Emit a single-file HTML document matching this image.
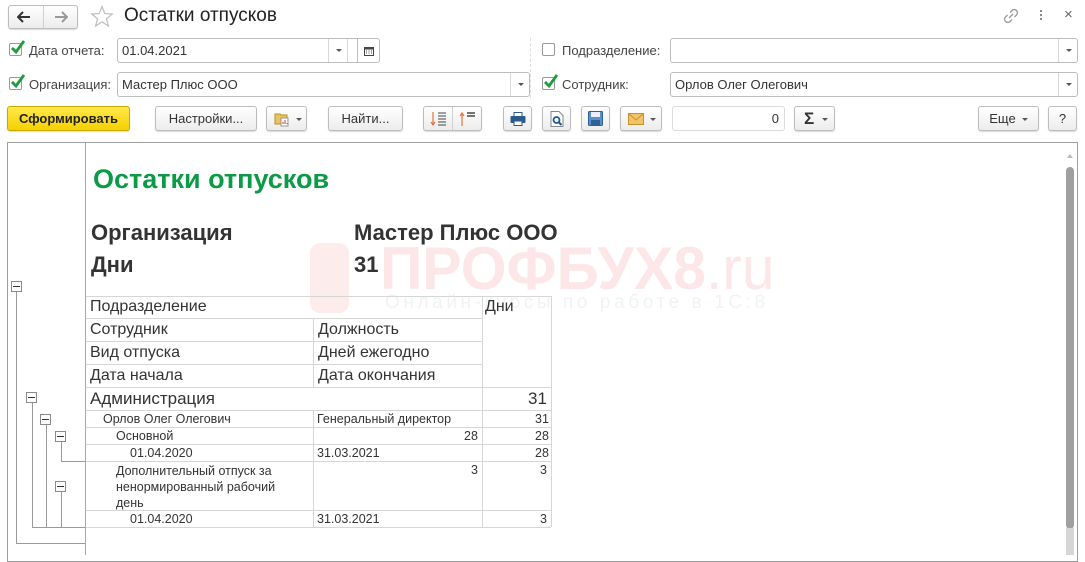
<!DOCTYPE html>
<html><head><meta charset="utf-8">
<style>
*{box-sizing:border-box;margin:0;padding:0}
body{width:1085px;height:555px;overflow:hidden;background:#fff;font-family:"Liberation Sans",Arial,sans-serif;color:#333;position:relative;font-size:13px}
.a{position:absolute}
.btn{position:absolute;height:25px;border:1px solid #bdbdbd;border-radius:3px;background:linear-gradient(#fff,#ececec);box-shadow:0 1px 1px rgba(0,0,0,.15);font-size:13px;color:#333;display:flex;align-items:center;justify-content:center}
.inp{position:absolute;height:25px;border:1px solid #bdbdbd;border-radius:3px;background:#fff;font-size:13px;color:#333;padding-left:4px;display:flex;align-items:center}
.dd{position:absolute;right:0;top:0;width:19px;height:23px;border-left:1px solid #d8d8d8}
.dd:after{content:"";position:absolute;left:7px;top:10px;border:3px solid transparent;border-top:3px solid #555}
.cb{position:absolute;width:13px;height:13px;border:1px solid #9a9a9a;border-radius:2px;background:#fff}
.lbl{position:absolute;font-size:13px;color:#444}
.t{position:absolute;font-size:16px;color:#333;white-space:nowrap}
.s{position:absolute;font-size:12.5px;color:#333;white-space:nowrap}
.hl{position:absolute;height:1px;background:#d6d6d6}
.vl{position:absolute;width:1px;background:#d6d6d6}
.tl{position:absolute;background:#9a9a9a}
.mb{position:absolute;width:11px;height:11px;border:1px solid #8a8a8a;background:#fff}
.mb:after{content:"";position:absolute;left:1px;top:4px;width:7px;height:1px;background:#333}
.h{position:absolute;font-size:22px;font-weight:bold;color:#333;white-space:nowrap}
</style></head><body>

<!-- top nav -->
<div class="btn" style="left:8px;top:5px;width:70px;height:24px;border-radius:3px"></div>
<div class="a" style="left:43px;top:6px;width:1px;height:22px;background:#d0d0d0"></div>
<svg class="a" style="left:17px;top:11px" width="14" height="12"><path d="M1 6H13M6 1L1 6L6 11" stroke="#333" stroke-width="2" fill="none"/></svg>
<svg class="a" style="left:54px;top:11px" width="14" height="12"><path d="M1 6H13M8 1L13 6L8 11" stroke="#999" stroke-width="2" fill="none"/></svg>
<svg class="a" style="left:90px;top:5px" width="24" height="23"><path d="M12 1.5L14.8 8.6L22.3 9L16.4 13.8L18.4 21L12 16.9L5.6 21L7.6 13.8L1.7 9L9.2 8.6Z" fill="none" stroke="#bdbdbd" stroke-width="1.2"/></svg>
<div class="a" style="left:124px;top:5px;font-size:19px;color:#222">Остатки отпусков</div>
<svg class="a" style="left:1003px;top:8px" width="16" height="16"><path d="M6 10L10 6M7 4.5L9 2.5A2.5 2.5 0 0 1 13.5 7L11.5 9M9 11.5L7 13.5A2.5 2.5 0 0 1 2.5 9L4.5 7" stroke="#999" stroke-width="1.3" fill="none"/></svg>
<div class="a" style="left:1040px;top:10px;width:2px;height:2px;background:#888;box-shadow:0 4px 0 #888,0 8px 0 #888"></div>
<div class="a" style="left:1064px;top:6px;font-size:15px;color:#666">×</div>

<!-- row 1 -->
<div class="cb" style="left:9px;top:43px"></div>
<svg class="a" style="left:9px;top:39px" width="17" height="17"><path d="M3 9L7 13L15 2" stroke="#1e9b3c" stroke-width="2.8" fill="none"/></svg>
<div class="lbl" style="left:29px;top:43px">Дата отчета:</div>
<div class="inp" style="left:117px;top:38px;width:251px">01.04.2021<div class="dd" style="right:19px;width:20px;border-right:0"></div></div>
<div class="a" style="left:347px;top:39px;width:1px;height:23px;background:#d8d8d8"></div>
<div class="btn" style="left:357px;top:38px;width:23px;border-radius:0 3px 3px 0;box-shadow:none;background:#fff"><svg width="10" height="10"><rect x="0.5" y="1.5" width="9" height="8" fill="none" stroke="#444"/><rect x="0.5" y="1.5" width="9" height="2" fill="#444"/><path d="M2 5h1M4.5 5h1M7 5h1M2 7h1M4.5 7h1M7 7h1" stroke="#444"/></svg></div>
<div class="a" style="left:530px;top:38px;height:60px;border-left:1px dashed #ddd"></div>
<div class="cb" style="left:542px;top:43px"></div>
<div class="lbl" style="left:562px;top:43px">Подразделение:</div>
<div class="inp" style="left:670px;top:38px;width:408px"><div class="dd"></div></div>

<!-- row 2 -->
<div class="cb" style="left:9px;top:77px"></div>
<svg class="a" style="left:9px;top:73px" width="17" height="17"><path d="M3 9L7 13L15 2" stroke="#1e9b3c" stroke-width="2.8" fill="none"/></svg>
<div class="lbl" style="left:29px;top:77px">Организация:</div>
<div class="inp" style="left:117px;top:72px;width:413px">Мастер Плюс ООО<div class="dd"></div></div>
<div class="cb" style="left:542px;top:77px"></div>
<svg class="a" style="left:542px;top:73px" width="17" height="17"><path d="M3 9L7 13L15 2" stroke="#1e9b3c" stroke-width="2.8" fill="none"/></svg>
<div class="lbl" style="left:562px;top:77px">Сотрудник:</div>
<div class="inp" style="left:670px;top:72px;width:408px">Орлов Олег Олегович<div class="dd"></div></div>

<!-- toolbar -->
<div class="btn" style="left:7px;top:106px;width:123px;background:linear-gradient(#ffe94a,#f5d000);border-color:#c9a800;font-weight:bold;color:#222">Сформировать</div>
<div class="btn" style="left:155px;top:106px;width:102px">Настройки...</div>
<div class="btn" style="left:266px;top:106px;width:41px;justify-content:flex-start;padding-left:7px"><svg width="16" height="16"><path d="M1 3h5l1 1h6v9H1z" fill="#e8c45a" stroke="#b8902a"/><rect x="7" y="7" width="7" height="8" fill="#fff" stroke="#999"/><path d="M9 13v-2M11 13v-4M13 13v-1" stroke="#d33"/></svg><span style="margin-left:6px;border:3px solid transparent;border-top:3px solid #555;margin-top:4px"></span></div>
<div class="btn" style="left:328px;top:106px;width:75px">Найти...</div>
<div class="btn" style="left:423px;top:106px;width:59px"></div>
<div class="a" style="left:452px;top:107px;width:1px;height:23px;background:#d0d0d0"></div>
<svg class="a" style="left:430px;top:111px" width="18" height="16"><path d="M3 1v12M1 11l2 3 2-3" stroke="#e8743b" stroke-width="1.2" fill="none"/><path d="M8 2h8M8 5h8M8 8h8M8 11h8M8 14h8" stroke="#444"/></svg>
<svg class="a" style="left:459px;top:111px" width="18" height="16"><path d="M3 15V3M1 5l2-3 2 3" stroke="#e8743b" stroke-width="1.2" fill="none"/><path d="M8 2h8M8 5h8" stroke="#222" stroke-width="1.3"/></svg>
<div class="btn" style="left:503px;top:106px;width:29px"><svg width="16" height="14"><rect x="4" y="0.5" width="8" height="4" fill="#fff" stroke="#2a5a8a"/><rect x="0.5" y="4" width="15" height="7" rx="1" fill="#2a5a8a"/><rect x="4" y="9" width="8" height="4.5" fill="#fff" stroke="#2a5a8a"/></svg></div>
<div class="btn" style="left:542px;top:106px;width:29px"><svg width="14" height="16"><path d="M1 .5h8l4 4v11H1z" fill="#fff" stroke="#888"/><circle cx="6.5" cy="9" r="3" fill="none" stroke="#1f5b8f" stroke-width="1.8"/><path d="M8.5 11l3 3" stroke="#1f5b8f" stroke-width="2"/></svg></div>
<div class="btn" style="left:581px;top:106px;width:29px"><svg width="15" height="15"><rect x="0.5" y="0.5" width="14" height="14" rx="1" fill="#5b8fc7" stroke="#2f5f95"/><rect x="3" y="1" width="9" height="5" fill="#eef"/><rect x="3" y="9" width="9" height="5" fill="#2f5f95"/></svg></div>
<div class="btn" style="left:620px;top:106px;width:42px;justify-content:flex-start;padding-left:7px"><svg width="16" height="12"><rect x="0.5" y="0.5" width="15" height="11" fill="#f2c46a" stroke="#c8902a"/><path d="M.5 .5L8 7L15.5 .5" stroke="#c8902a" fill="none"/></svg><span style="margin-left:6px;border:3px solid transparent;border-top:3px solid #555;margin-top:4px"></span></div>
<div class="inp" style="left:672px;top:106px;width:113px;border-color:#dcdcdc;justify-content:flex-end;padding-right:5px">0</div>
<div class="btn" style="left:794px;top:106px;width:41px;justify-content:flex-start;padding-left:9px;font-size:17px;font-weight:bold;color:#333">Σ<span style="margin-left:8px;border:3px solid transparent;border-top:3px solid #555;margin-top:4px"></span></div>
<div class="btn" style="left:978px;top:106px;width:61px">Еще<span style="margin-left:6px;border:3px solid transparent;border-top:3px solid #555;margin-top:4px"></span></div>
<div class="btn" style="left:1048px;top:106px;width:29px">?</div>

<!-- report frame -->
<div class="a" style="left:7px;top:142px;width:1071px;height:420px;border:1px solid #a0a0a0"></div>
<div class="a" style="left:85px;top:143px;width:1px;height:412px;background:#a8a8a8"></div>
<div class="a" style="left:1066px;top:167px;width:8px;height:362px;border-radius:4px;background:#a0a0a0"></div>
<div class="a" style="left:1066px;top:528px;width:8px;height:27px;background:#d6d6d6"></div>
<div class="a" style="left:1067px;top:151px;border:3px solid transparent;border-bottom:4px solid #bbb"></div>

<!-- watermark -->
<div class="a" style="left:310px;top:243px;width:39px;height:70px;border-radius:10px;background:#fcecec"></div>
<div class="a" style="left:380px;top:234px;font-size:60px;color:#fce6e7;font-weight:bold;white-space:nowrap;transform:scaleX(0.98);transform-origin:left top">ПРОФБУХ8<span style="font-weight:normal">.ru</span></div>
<div class="a" style="left:385px;top:292px;font-size:19px;color:#f2f2f2;letter-spacing:3.6px;white-space:nowrap">Онлайн-курсы по работе в 1С:8</div>

<!-- report header -->
<div class="a" style="left:93px;top:164px;font-size:27px;font-weight:bold;color:#0b9a45">Остатки отпусков</div>
<div class="h" style="left:91px;top:220px">Организация</div>
<div class="h" style="left:354px;top:220px">Мастер Плюс ООО</div>
<div class="h" style="left:91px;top:252px">Дни</div>
<div class="h" style="left:354px;top:252px">31</div>

<!-- table grid -->
<div class="hl" style="left:86px;top:296px;width:465px"></div>
<div class="hl" style="left:86px;top:318px;width:396px"></div>
<div class="hl" style="left:86px;top:341px;width:396px"></div>
<div class="hl" style="left:86px;top:364px;width:396px"></div>
<div class="hl" style="left:86px;top:387px;width:465px"></div>
<div class="hl" style="left:86px;top:410px;width:465px"></div>
<div class="hl" style="left:86px;top:427px;width:465px"></div>
<div class="hl" style="left:86px;top:444px;width:465px"></div>
<div class="hl" style="left:86px;top:461px;width:465px"></div>
<div class="hl" style="left:86px;top:510px;width:465px"></div>
<div class="hl" style="left:86px;top:527px;width:465px"></div>
<div class="vl" style="left:313px;top:318px;height:69px"></div>
<div class="vl" style="left:313px;top:410px;height:117px"></div>
<div class="vl" style="left:482px;top:296px;height:231px"></div>
<div class="vl" style="left:551px;top:296px;height:231px"></div>

<div class="t" style="left:90px;top:298px">Подразделение</div>
<div class="t" style="left:485px;top:298px">Дни</div>
<div class="t" style="left:90px;top:321px">Сотрудник</div>
<div class="t" style="left:318px;top:321px">Должность</div>
<div class="t" style="left:90px;top:344px">Вид отпуска</div>
<div class="t" style="left:318px;top:344px">Дней ежегодно</div>
<div class="t" style="left:90px;top:367px">Дата начала</div>
<div class="t" style="left:318px;top:367px">Дата окончания</div>
<div class="t" style="left:90px;top:389px;font-size:17px">Администрация</div>
<div class="t" style="left:528px;top:389px;font-size:17px">31</div>
<div class="s" style="left:103px;top:412px">Орлов Олег Олегович</div>
<div class="s" style="left:317px;top:412px">Генеральный директор</div>
<div class="s" style="left:535px;top:412px">31</div>
<div class="s" style="left:116px;top:429px">Основной</div>
<div class="s" style="left:464px;top:429px">28</div>
<div class="s" style="left:535px;top:429px">28</div>
<div class="s" style="left:130px;top:446px">01.04.2020</div>
<div class="s" style="left:317px;top:446px">31.03.2021</div>
<div class="s" style="left:535px;top:446px">28</div>
<div class="s" style="left:116px;top:463px;line-height:16px">Дополнительный отпуск за<br>ненормированный рабочий<br>день</div>
<div class="s" style="left:471px;top:463px">3</div>
<div class="s" style="left:540px;top:463px">3</div>
<div class="s" style="left:130px;top:512px">01.04.2020</div>
<div class="s" style="left:317px;top:512px">31.03.2021</div>
<div class="s" style="left:540px;top:512px">3</div>

<!-- tree lines -->
<div class="tl" style="left:16px;top:292px;width:1px;height:252px"></div>
<div class="tl" style="left:16px;top:543px;width:69px;height:1px"></div>
<div class="tl" style="left:32px;top:403px;width:1px;height:125px"></div>
<div class="tl" style="left:32px;top:527px;width:53px;height:1px"></div>
<div class="tl" style="left:46px;top:425px;width:1px;height:103px"></div>
<div class="tl" style="left:61px;top:442px;width:1px;height:20px"></div>
<div class="tl" style="left:61px;top:461px;width:24px;height:1px"></div>
<div class="tl" style="left:61px;top:492px;width:1px;height:36px"></div>
<div class="mb" style="left:11px;top:281px"></div>
<div class="mb" style="left:26px;top:392px"></div>
<div class="mb" style="left:40px;top:414px"></div>
<div class="mb" style="left:55px;top:431px"></div>
<div class="mb" style="left:55px;top:481px"></div>
</body></html>
